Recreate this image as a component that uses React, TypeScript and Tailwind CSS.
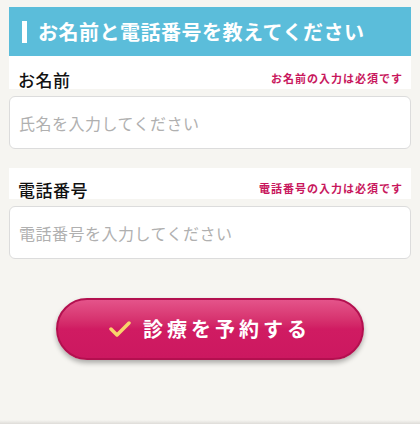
const jp = "font-['Noto_Sans_CJK_JP','Noto_Sans',sans-serif]";

function Field({ label, required, placeholder, tall }: { label: string; required: string; placeholder: string; tall?: boolean }) {
  return (
    <div>
      <div className={`${tall ? 'h-[33px]' : 'h-[31px]'} bg-white flex items-end justify-between pl-[9px] pr-[8px]`}>
        <span className="text-[17px] leading-none font-medium tracking-[0.5px] text-[#111] pb-[1px]">{label}</span>
        <span className="text-[11px] leading-none font-bold tracking-[1px] text-[#c8175d] pb-[5px]">{required}</span>
      </div>
      <input
        className={`${jp} mt-[7px] block w-full h-[53px] rounded-[6px] border border-[#dcdcdc] bg-white px-[9px] text-[16px] tracking-[0.5px] placeholder:text-[#b0b0b0] outline-none`}
        placeholder={placeholder}
      />
    </div>
  );
}

export default function App() {
  return (
    <div className={`${jp} relative h-[424px] overflow-hidden bg-[#f6f5f1]`}>
      <div className="px-[9px] pt-[7px]">
        <div className="h-[49px] bg-[#5bbdda] flex items-center pl-[13px]">
          <div className="w-[5px] h-[22px] bg-white mr-[11px]" />
          <h2 className="text-white font-bold text-[20px] leading-none tracking-[0.5px]">お名前と電話番号を教えてください</h2>
        </div>
        <Field tall label="お名前" required="お名前の入力は必須です" placeholder="氏名を入力してください" />
        <div className="mt-[19px]">
          <Field label="電話番号" required="電話番号の入力は必須です" placeholder="電話番号を入力してください" />
        </div>
        <div className="mt-[39px] flex justify-center">
          <button className="w-[308px] h-[62px] rounded-full border-2 border-[#b3104f] bg-gradient-to-b from-[#e4538a] via-[#d01b62] to-[#cc1860] shadow-[0_3px_5px_rgba(0,0,0,0.3)] flex items-center justify-center gap-[12px]">
            <svg width="22" height="18" viewBox="0 0 22 18">
              <polyline points="2,9 8,15 20,3" fill="none" stroke="#f8d56b" strokeWidth="3.5" strokeLinecap="round" strokeLinejoin="round" />
            </svg>
            <span className="text-white font-bold text-[20px] leading-none tracking-[4px]">診療を予約する</span>
          </button>
        </div>
      </div>
      <div className="absolute bottom-0 left-0 right-0 h-[4px] bg-gradient-to-b from-[#f6f5f1] to-[#dedcd8]" />
    </div>
  );
}
